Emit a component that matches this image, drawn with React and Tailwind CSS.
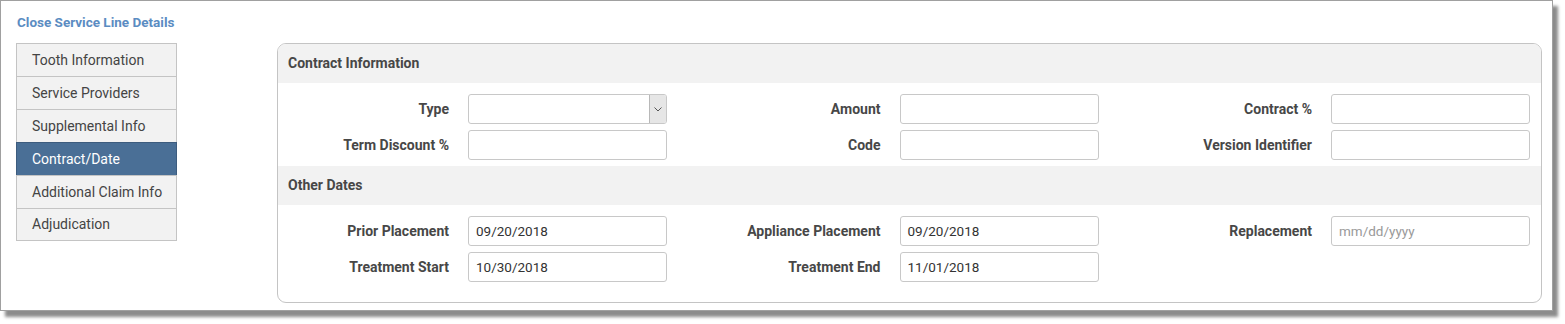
import React from 'react';

const tabs = [
  'Tooth Information',
  'Service Providers',
  'Supplemental Info',
  'Contract/Date',
  'Additional Claim Info',
  'Adjudication',
];

const Field = ({ label, value, placeholder, select, last }) => (
  <div className={`flex items-center ${last ? 'flex-1' : 'w-[431.5px] shrink-0'}`}>
    <div className="w-[171px] shrink-0 text-right text-[14px] font-bold text-[#474747]">{label}</div>
    {label && (
      select ? (
        <div className="ml-[19px] w-[199px] h-[30px] border border-[#c8c8c8] rounded-[3px] flex justify-end overflow-hidden">
          <div className="w-[17px] h-full bg-[#e6e6e6] border-l border-[#b8b8b8] flex items-center justify-center">
            <svg width="8" height="5" viewBox="0 0 8 5" fill="none">
              <path d="M0.5 0.5 L4 4 L7.5 0.5" stroke="#555" strokeWidth="1" />
            </svg>
          </div>
        </div>
      ) : (
        <div className="ml-[19px] w-[199px] h-[30px] border border-[#c8c8c8] rounded-[3px] flex items-center px-[7px] text-[13.5px]">
          {value ? <span className="text-[#333]">{value}</span> : <span className="text-[#999]">{placeholder}</span>}
        </div>
      )
    )}
  </div>
);

const Section = ({ title, rows, last }) => (
  <>
    <div className="h-[39px] bg-[#f2f2f2] flex items-center pl-[10px] text-[14px] font-bold text-[#474747]">{title}</div>
    <div className={`pt-[11px] flex flex-col gap-[6px] ${last ? 'pb-[20px]' : 'pb-[6px]'}`}>
      {rows.map((row, i) => (
        <div key={i} className="flex">
          {row.map((f, j) => <Field key={j} {...f} last={j === row.length - 1} />)}
        </div>
      ))}
    </div>
  </>
);

export default function App() {
  return (
    <div className="bg-white w-[1565px] h-[324px]" style={{ fontFamily: 'Roboto, "Liberation Sans", sans-serif' }}>
      <div className="w-[1553px] h-[311px] border border-[#a0a0a0] bg-white shadow-[5px_6px_3px_rgba(0,0,0,0.45)] pl-[15px] pt-[13px]">
        <div className="text-[13.5px] font-bold text-[#5b8cc2] leading-[16px] pl-[1px]">Close Service Line Details</div>
        <div className="flex mt-[13px]">
          <div className="w-[161px] flex flex-col">
            {tabs.map((t, i) => {
              const active = t === 'Contract/Date';
              return (
                <div
                  key={t}
                  className={`h-[33px] flex items-center pl-[15px] text-[14px] border-x border-t ${i === tabs.length - 1 ? 'border-b' : ''} ${active ? 'bg-[#4a6f96] text-white border-[#3d5c7e]' : 'bg-[#f2f2f2] text-[#444] border-[#c4c4c4]'}`}
                >
                  {t}
                </div>
              );
            })}
          </div>
          <div className="ml-[100px] w-[1265px] h-[260px] border border-[#c4c4c4] rounded-[9px] overflow-hidden">
            <Section
              title="Contract Information"
              rows={[
                [{ label: 'Type', select: true }, { label: 'Amount' }, { label: 'Contract %' }],
                [{ label: 'Term Discount %' }, { label: 'Code' }, { label: 'Version Identifier' }],
              ]}
            />
            <Section
              title="Other Dates"
              last
              rows={[
                [
                  { label: 'Prior Placement', value: '09/20/2018' },
                  { label: 'Appliance Placement', value: '09/20/2018' },
                  { label: 'Replacement', placeholder: 'mm/dd/yyyy' },
                ],
                [
                  { label: 'Treatment Start', value: '10/30/2018' },
                  { label: 'Treatment End', value: '11/01/2018' },
                  { label: '' },
                ],
              ]}
            />
          </div>
        </div>
      </div>
    </div>
  );
}
